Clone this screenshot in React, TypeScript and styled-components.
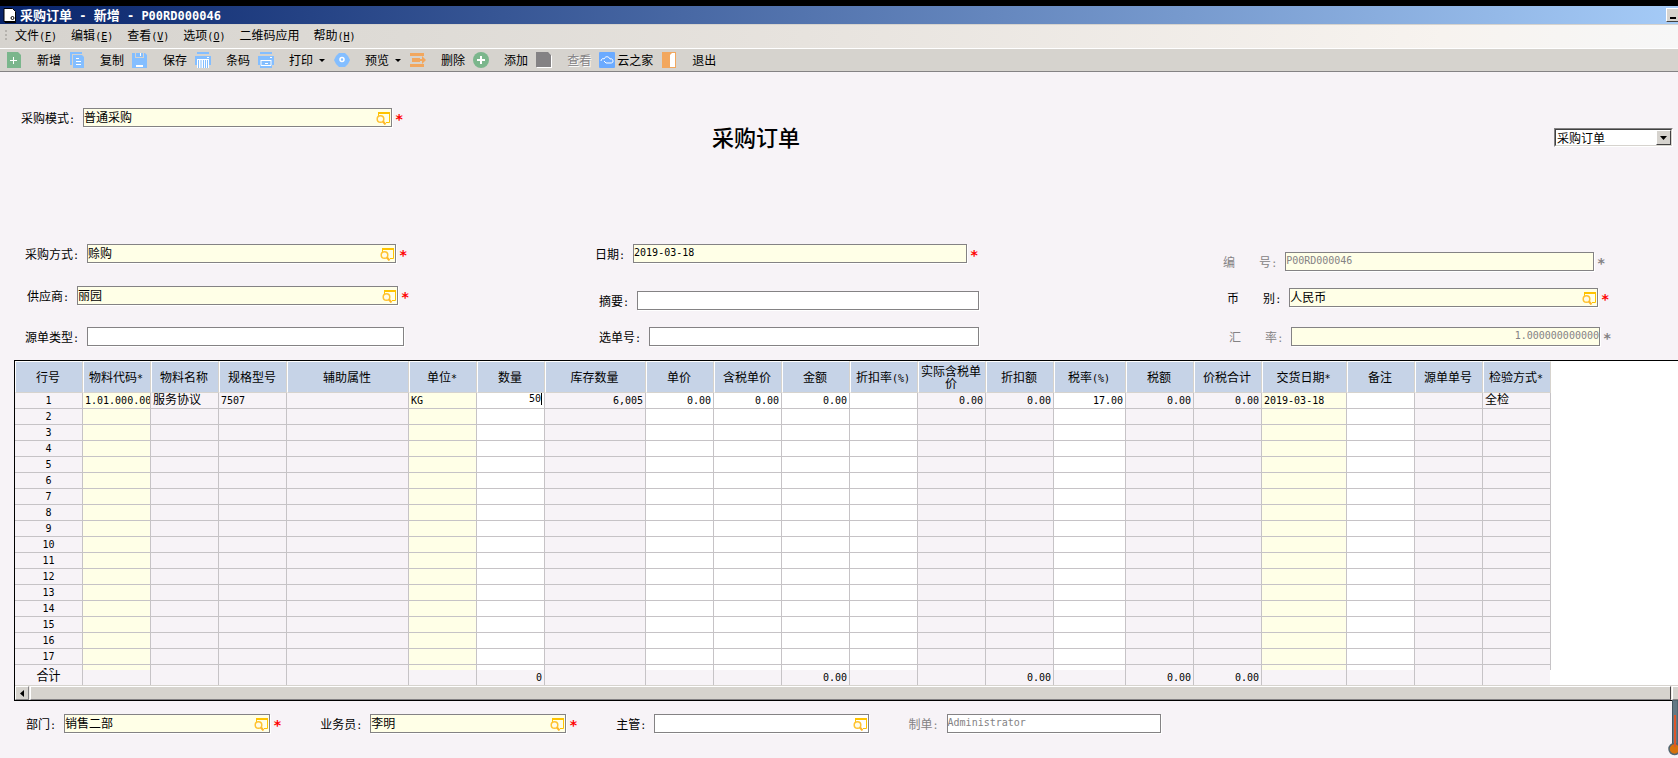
import React from "react";
import styled, { createGlobalStyle, css } from "styled-components";

const GlobalStyle = createGlobalStyle`
  * { box-sizing: border-box; }
  body {
    margin: 0;
    background: #f7f3f7;
    color: #000;
    font: 12px/14px "Noto Sans CJK SC", "Liberation Sans", sans-serif;
  }
  button, input, select { font: inherit; color: inherit; margin: 0; padding: 0; border: 0; border-radius: 0; background: none; }
  input:focus, select:focus { outline: none; }
`;

const MONO = `"DejaVu Sans Mono", "Liberation Mono", monospace`;

/* ---------- text ---------- */

const Latin = styled.span`
  font-family: ${MONO};
  font-size: 10px;
  line-height: 0;
  white-space: pre;
`;

/* Half-width characters are set in the narrow fixed-pitch face. */
function Mixed({ text }: { text: string }) {
  return (
    <>
      {text
        .split(/([\x20-\x7e]+)/)
        .filter(Boolean)
        .map((part, i) => (/^[\x20-\x7e]/.test(part) ? <Latin key={i}>{part}</Latin> : part))}
    </>
  );
}

/* ---------- window chrome ---------- */

const Page = styled.div`
  position: relative;
  min-height: 100vh;
  overflow: hidden;
`;

const TitleBar = styled.header`
  display: flex;
  align-items: center;
  gap: 4px;
  height: 24px;
  padding-left: 3px;
  border-top: 6px solid #000;
  background: linear-gradient(90deg, #08246b, #a5cbf7);
  color: #fff;
  font-size: 13px;
  font-weight: bold;
  line-height: 18px;
  ${Latin} { font-size: 12px; }
`;

const Caption = styled.span`
  flex: 1;
`;

const MinimizeButton = styled.button`
  flex: none;
  display: flex;
  align-items: flex-end;
  width: 12px;
  height: 14px;
  padding: 0 0 2px 3px;
  border: solid;
  border-width: 1px 0 1px 1px;
  border-color: #fff #424142 #424142 #fff;
  background: #d6d3ce;
`;

const MenuBar = styled.nav`
  display: flex;
  align-items: center;
  gap: 14px;
  height: 25px;
  padding: 0 0 3px 5px;
  border-top: 1px solid #d6d3ce;
  border-bottom: 1px solid #fff;
  background: linear-gradient(90deg, #d6d3ce, #dedbd6 24%, #e7e3de 48%, #f7f3ef 86%, #f7f7f7);
`;

const Grip = styled.span`
  width: 2px;
  height: 11px;
  margin-right: -6px;
  background: repeating-linear-gradient(#b5b2ad 0 2px, transparent 2px 4px);
`;

const MenuItem = styled.button`
  white-space: nowrap;
`;

const ToolBar = styled.div`
  display: flex;
  align-items: center;
  height: 23px;
  padding-left: 6px;
  border-bottom: 1px solid #848284;
  background: #d6d3ce;
`;

const ToolButton = styled.button<{ $tight?: boolean }>`
  display: flex;
  align-items: center;
  gap: ${(p) => (p.$tight ? 2 : 15)}px;
  padding-right: 8px;
  white-space: nowrap;
  svg { flex: none; }
  &:disabled {
    color: #848284;
    text-shadow: 1px 1px #fff;
  }
`;

const DropMark = styled.span`
  margin: 0 1px 0 -9px;
  border: 3px solid transparent;
  border-width: 3px 3px 0;
  border-top-color: #000;
`;

/* ---------- form ---------- */

const Heading = styled.section`
  display: grid;
  grid-template-columns: 381fr 708fr 444fr 119fr;
  align-items: start;
  height: 172px;
  padding: 36px 5px 0 21px;
`;

const DocTitle = styled.h1`
  margin: 18px 0 0;
  text-align: center;
  font-size: 22px;
  line-height: 20px;
  font-weight: 500;
`;

const ComboBox = styled.div`
  position: relative;
  grid-column: 4;
  margin-top: 20px;
  border: 1px solid;
  border-color: #848284 #fff #fff #848284;
`;

const Select = styled.select`
  display: block;
  appearance: none;
  width: 100%;
  height: 17px;
  padding-left: 1px;
  border: 1px solid;
  border-color: #424142 #d6d3ce #d6d3ce #424142;
  background: #fff;
  line-height: 14px;
`;

const ComboArrow = styled.span`
  position: absolute;
  top: 1px;
  right: 1px;
  display: flex;
  align-items: center;
  justify-content: center;
  width: 15px;
  height: 15px;
  border: 1px solid;
  border-color: #fff #424142 #424142 #fff;
  background: #d6d3ce;
  pointer-events: none;
`;

const FormGrid = styled.section`
  display: grid;
  grid-template-columns: 383fr 187fr 384fr 244fr 387fr;
  align-items: end;
  padding: 0 68px 0 25px;
`;

const Column = styled.div<{ $col: number }>`
  grid-column: ${(p) => p.$col};
  display: flex;
  flex-direction: column;
`;

const FieldRow = styled.div<{ $top?: number; $start?: number; $end?: number; $muted?: boolean }>`
  display: flex;
  min-width: 0;
  height: 19px;
  margin-top: ${(p) => p.$top ?? 0}px;
  padding: 0 ${(p) => p.$end ?? 0}px 0 ${(p) => p.$start ?? 0}px;
  color: ${(p) => (p.$muted ? "#848284" : "#000")};
`;

const Label = styled.label`
  flex: none;
  padding: 3px 8px 0 0;
  white-space: pre;
`;

const Box = styled.div<{ $cream?: boolean }>`
  flex: 1;
  display: flex;
  min-width: 0;
  border: 1px solid #848284;
  box-shadow: 1px 1px #fff;
  background: ${(p) => (p.$cream ? "#ffffe7" : "#fff")};
`;

const Input = styled.input<{ $latin?: boolean; $right?: boolean }>`
  flex: 1;
  min-width: 0;
  height: 15px;
  text-align: ${(p) => (p.$right ? "right" : "left")};
  ${(p) =>
    p.$latin &&
    css`
      font-family: ${MONO};
      font-size: 10px;
    `}
`;

const LookupButton = styled.button`
  display: flex;
  padding: 3px 1px 0 0;
`;

const Star = styled.span<{ $muted?: boolean }>`
  flex: none;
  width: 7px;
  margin-left: 3px;
  padding-top: 3px;
  color: ${(p) => (p.$muted ? "#848284" : "#f00")};
  font: bold 14px/16px ${MONO};
`;

const Footer = styled.section`
  display: grid;
  grid-template-columns: 254fr 256fr 252fr 252fr 477fr;
  column-gap: 40px;
  padding: 13px 0 25px 26px;
`;

/* ---------- grid ---------- */

const Sheet = styled.section`
  margin: 14px 0 0 14px;
  border: 1px solid #000;
  border-right: 0;
  background: #fff;
  overflow: hidden;
`;

const Table = styled.table`
  table-layout: fixed;
  width: 0;
  border-collapse: separate;
  border-spacing: 0;
`;

const HeadCell = styled.th`
  height: 32px;
  padding: 0 2px 0 0;
  border: 1px solid;
  border-color: #fff #d6d3ce #d6d3ce #fff;
  background: #c6d3e7;
  font-weight: normal;
  line-height: 12px;
`;

type Tone = "plain" | "cream" | "white";
const TONES: Record<Tone, string> = { plain: "#f7f3f7", cream: "#ffffe7", white: "#fff" };

const Cell = styled.td<{ $tone: Tone; $align?: string }>`
  height: 16px;
  padding: 0 2px 3px;
  border-right: 1px solid #c6c3c6;
  border-bottom: 1px solid #c6c3c6;
  background: ${(p) => TONES[p.$tone]};
  line-height: 12px;
  text-align: ${(p) => p.$align ?? "left"};
  white-space: nowrap;
  overflow: hidden;
`;

const CutCell = styled(Cell)`
  height: 5px;
  padding-bottom: 0;
  border-bottom: 0;
`;

const Clip = styled.div`
  height: 5px;
  overflow: hidden;
`;

const TotalCell = styled(Cell)`
  height: 15px;
  border-bottom: 0;
  &:last-child { border-right-color: #fff; }
`;

const QtyInput = styled.input`
  display: block;
  width: 100%;
  height: 12px;
  border-right: 1px solid #000;
  font-family: ${MONO};
  font-size: 10px;
  line-height: 12px;
  text-align: right;
`;

const ScrollBar = styled.div`
  display: flex;
  gap: 1px;
  height: 15px;
  border-top: 1px solid #d6d3ce;
  background: #efebe7;
`;

const ScrollButton = styled.button`
  flex: none;
  display: flex;
  align-items: center;
  justify-content: center;
  width: 14px;
  border: 1px solid;
  border-color: #fff #848284 #848284 #fff;
  background: #d6d3ce;
`;

const ScrollEnd = styled(ScrollButton)`
  width: 6px;
  border-right: 0;
`;

const Thumb = styled.div`
  flex: 1;
  border: 1px solid;
  border-color: #fff #424142 #848284 #fff;
  background: #d6d3ce;
`;

const Gauge = styled.svg`
  position: absolute;
  top: 700px;
  right: 0;
`;

/* ---------- icons ---------- */

const Svg = ({ children, w = 16, h = 16 }: { children: React.ReactNode; w?: number; h?: number }) => (
  <svg width={w} height={h} viewBox={`0 0 ${w} ${h}`} fill="none" aria-hidden="true">
    {children}
  </svg>
);

const BLUE = "#84beff";
const GREEN = "#7bb68c";
const ORANGE = "#f2a75e";

const icons: Record<string, React.ReactNode> = {
  add: (
    <Svg>
      <path d="M1 0h11l3 3v13H1z" fill={GREEN} />
      <path d="M7.500 5v7M4 8.500h7" stroke="#fff" />
    </Svg>
  ),
  copy: (
    <Svg>
      <path d="M1 0h12v2H3v11H1z" fill={BLUE} />
      <path d="M4 3h9l2 2v11H4z" fill={BLUE} />
      <path d="M7 6.500h3M7 9.500h5M7 12.500h5" stroke="#fff" />
    </Svg>
  ),
  save: (
    <Svg>
      <path d="M0 1h3v5h9V1h1l2 2v13H0z" fill={BLUE} />
      <path d="M4 1h7v4H4z" fill={BLUE} />
      <path d="M8.500 1v3" stroke="#fff" />
      <path d="M4 13h7v2H4z" fill="#fff" />
    </Svg>
  ),
  barcode: (
    <Svg>
      <path d="M2 0h12v2H2zM0 4h16v9H0z" fill={BLUE} />
      <path d="M2 7h12v9H2z" fill="#fff" />
      <path d="M3.500 8v8M6 8v8M8.500 8v8M10.500 8v8M12.500 8v8" stroke={BLUE} />
      <path d="M12 5h2v1h-2z" fill="#fff" />
    </Svg>
  ),
  print: (
    <Svg>
      <path d="M2 0h12v2H2zM0 4h16v9h-2v3H2v-3H0z" fill={BLUE} />
      <path d="M12 5.500h2M3 8.500h10M3 8v5.500h10V8M7 11.500h3" stroke="#fff" />
    </Svg>
  ),
  preview: (
    <Svg>
      <path d="M0 8l2-4 3-3h6l3 3 2 4-2 4-3 3H5l-3-3z" fill={BLUE} />
      <circle cx="8" cy="7.500" r="2" stroke="#fff" strokeWidth="1.500" />
    </Svg>
  ),
  remove: (
    <Svg>
      <path d="M0 1h14v3H0zM0 12h14v3H0zM2 6h8v4H2zM12 4l4 4-4 4V9h-2V7h2z" fill={ORANGE} />
    </Svg>
  ),
  append: (
    <Svg>
      <circle cx="8" cy="8" r="8" fill={GREEN} />
      <path d="M8 4v8M4 8h8" stroke="#fff" strokeWidth="2" />
    </Svg>
  ),
  view: (
    <Svg>
      <path d="M1 1h12l3 3v12H1z" fill="#fff" />
      <path d="M0 0h12l3 3v12H0z" fill="#848284" />
    </Svg>
  ),
  cloud: (
    <Svg>
      <rect width="16" height="16" rx="1" fill="#6baaff" />
      <path d="M2 9c0-2 2-3 3-2 1-3 5-3 6 0 2-1 3 1 3 2 0 2-1 2-3 2H7L5 9" stroke="#fff" />
    </Svg>
  ),
  exit: (
    <Svg>
      <path d="M1 0h14v16H1z" fill={ORANGE} />
      <path d="M9 3l2-2h3v14H9z" fill="#fff" />
    </Svg>
  ),
};

const LookupIcon = () => (
  <Svg w={14} h={13}>
    <path d="M2 1h12" stroke="#ffc300" strokeWidth="2" />
    <path d="M2.500 2v2M13.500 2v8.500H10" stroke="#ffc300" />
    <circle cx="4.500" cy="7" r="3.300" stroke="#ffc331" strokeWidth="1.500" fill="#fffbe7" />
    <path d="M7 9.500l2.500 3" stroke="#ffb629" strokeWidth="2" />
  </Svg>
);

const AppIcon = () => (
  <Svg w={13} h={16}>
    <path d="M1 1.500h8.500l3 3v10H1z" fill="#fff" stroke="#000" />
    <path d="M2 15.500h11V5" stroke="#000" />
    <circle cx="9.500" cy="11" r="1.500" stroke="#000" />
  </Svg>
);

/* ---------- data ---------- */

const menus: [string, string?][] = [["文件", "F"], ["编辑", "E"], ["查看", "V"], ["选项", "O"], ["二维码应用"], ["帮助", "H"]];

type Tool = { label: string; icon: string; drop?: boolean; disabled?: boolean; tight?: boolean };
const tools: Tool[] = [
  { label: "新增", icon: "add" },
  { label: "复制", icon: "copy" },
  { label: "保存", icon: "save" },
  { label: "条码", icon: "barcode" },
  { label: "打印", icon: "print", drop: true },
  { label: "预览", icon: "preview", drop: true },
  { label: "删除", icon: "remove" },
  { label: "添加", icon: "append" },
  { label: "查看", icon: "view", disabled: true },
  { label: "云之家", icon: "cloud", tight: true },
  { label: "退出", icon: "exit" },
];

type Col = { title: string; width: number; tone: Tone; value?: string; align?: string; total?: string };
const columns: Col[] = [
  { title: "行号", width: 68, tone: "plain", align: "center", total: "合计" },
  { title: "物料代码*", width: 68, tone: "cream", value: "1.01.000.00" },
  { title: "物料名称", width: 68, tone: "plain", value: "服务协议" },
  { title: "规格型号", width: 68, tone: "plain", value: "7507" },
  { title: "辅助属性", width: 122, tone: "plain" },
  { title: "单位*", width: 68, tone: "cream", value: "KG" },
  { title: "数量", width: 68, tone: "white", value: "50", align: "right", total: "0" },
  { title: "库存数量", width: 101, tone: "plain", value: "6,005", align: "right" },
  { title: "单价", width: 68, tone: "white", value: "0.00", align: "right" },
  { title: "含税单价", width: 68, tone: "white", value: "0.00", align: "right" },
  { title: "金额", width: 68, tone: "white", value: "0.00", align: "right", total: "0.00" },
  { title: "折扣率(%)", width: 68, tone: "white" },
  { title: "实际含税单价", width: 68, tone: "plain", value: "0.00", align: "right" },
  { title: "折扣额", width: 68, tone: "plain", value: "0.00", align: "right", total: "0.00" },
  { title: "税率(%)", width: 72, tone: "white", value: "17.00", align: "right" },
  { title: "税额", width: 68, tone: "plain", value: "0.00", align: "right", total: "0.00" },
  { title: "价税合计", width: 68, tone: "plain", value: "0.00", align: "right", total: "0.00" },
  { title: "交货日期*", width: 85, tone: "cream", value: "2019-03-18" },
  { title: "备注", width: 68, tone: "white" },
  { title: "源单单号", width: 68, tone: "plain" },
  { title: "检验方式*", width: 68, tone: "plain", value: "全检" },
];

const rowNumbers = Array.from({ length: 17 }, (_, i) => i + 1);

/* ---------- parts ---------- */

type FieldProps = {
  id: string;
  label: string;
  value?: string;
  lookup?: boolean;
  star?: boolean;
  cream?: boolean;
  muted?: boolean;
  right?: boolean;
  top?: number;
  start?: number;
  end?: number;
};

function Field({ id, label, value = "", lookup, star, cream, muted, right, top, start, end }: FieldProps) {
  return (
    <FieldRow $top={top} $start={start} $end={end} $muted={muted}>
      <Label htmlFor={id}>
        <Mixed text={label} />
      </Label>
      <Box $cream={cream}>
        <Input id={id} defaultValue={value} readOnly={muted} $latin={/^[\x20-\x7e]+$/.test(value)} $right={right} />
        {lookup && (
          <LookupButton type="button" aria-label="查找">
            <LookupIcon />
          </LookupButton>
        )}
      </Box>
      {star && <Star $muted={muted}>*</Star>}
    </FieldRow>
  );
}

function OrderGrid() {
  return (
    <Sheet>
      <Table>
        <colgroup>
          {columns.map((c) => (
            <col key={c.title} style={{ width: c.width }} />
          ))}
        </colgroup>
        <thead>
          <tr>
            {columns.map((c) => (
              <HeadCell key={c.title} scope="col">
                <Mixed text={c.title} />
              </HeadCell>
            ))}
          </tr>
        </thead>
        <tbody>
          {rowNumbers.map((n) => (
            <tr key={n}>
              {columns.map((c, i) => (
                <Cell key={c.title} $tone={c.tone} $align={c.align}>
                  {i === 0 ? (
                    <Latin>{n}</Latin>
                  ) : n > 1 ? null : c.title === "数量" ? (
                    <QtyInput aria-label="数量" defaultValue={c.value} />
                  ) : (
                    c.value && <Mixed text={c.value} />
                  )}
                </Cell>
              ))}
            </tr>
          ))}
          <tr>
            {columns.map((c, i) => (
              <CutCell key={c.title} $tone={c.tone} $align={c.align}>
                <Clip>{i === 0 && <Latin>18</Latin>}</Clip>
              </CutCell>
            ))}
          </tr>
        </tbody>
        <tfoot>
          <tr>
            {columns.map((c) => (
              <TotalCell key={c.title} $tone="plain" $align={c.align}>
                {c.total && <Mixed text={c.total} />}
              </TotalCell>
            ))}
          </tr>
        </tfoot>
      </Table>
      <ScrollBar>
        <ScrollButton type="button" aria-label="向左滚动">
          <Svg w={4} h={7}>
            <path d="M4 0v7L0 3.500z" fill="#000" />
          </Svg>
        </ScrollButton>
        <Thumb />
        <ScrollEnd type="button" aria-label="向右滚动" />
      </ScrollBar>
    </Sheet>
  );
}

export default function App() {
  return (
    <Page>
      <GlobalStyle />
      <TitleBar>
        <AppIcon />
        <Caption>
          <Mixed text="采购订单 - 新增 - P00RD000046" />
        </Caption>
        <MinimizeButton type="button" aria-label="最小化">
          <Svg w={6} h={2}>
            <path d="M0 0h6v2H0z" fill="#000" />
          </Svg>
        </MinimizeButton>
      </TitleBar>
      <MenuBar>
        <Grip />
        {menus.map(([name, key]) => (
          <MenuItem key={name} type="button">
            {name}
            {key && (
              <Latin>
                (<u>{key}</u>)
              </Latin>
            )}
          </MenuItem>
        ))}
      </MenuBar>
      <ToolBar>
        {tools.map((t) => (
          <ToolButton key={t.icon} type="button" disabled={t.disabled} $tight={t.tight}>
            {icons[t.icon]}
            <span>{t.label}</span>
            {t.drop && <DropMark />}
          </ToolButton>
        ))}
      </ToolBar>

      <Heading>
        <Field id="mode" label="采购模式:" value="普通采购" lookup star cream />
        <DocTitle>采购订单</DocTitle>
        <ComboBox>
          <Select aria-label="单据类型" defaultValue="采购订单">
            <option>采购订单</option>
          </Select>
          <ComboArrow>
            <Svg w={7} h={4}>
              <path d="M0 0h7L3.500 4z" fill="#000" />
            </Svg>
          </ComboArrow>
        </ComboBox>
      </Heading>

      <FormGrid>
        <Column $col={1}>
          <Field id="way" label="采购方式:" value="赊购" lookup star cream end={2} />
          <Field id="supplier" label="供应商:" value="丽园" lookup star cream top={23} start={2} />
          <Field id="source" label="源单类型:" top={22} end={4} />
        </Column>
        <Column $col={3}>
          <Field id="date" label="日期:" value="2019-03-18" star cream end={2} />
          <Field id="summary" label="摘要:" top={28} start={4} />
          <Field id="pick" label="选单号:" top={17} start={4} />
        </Column>
        <Column $col={5}>
          <Field id="number" label="编    号:" value="P00RD000046" star cream muted end={6} />
          <Field id="currency" label="币    别:" value="人民币" lookup star cream top={17} start={4} end={2} />
          <Field id="rate" label="汇    率:" value="1.000000000000" star cream muted right top={20} start={6} />
        </Column>
      </FormGrid>

      <OrderGrid />

      <Footer>
        <Field id="dept" label="部门:" value="销售二部" lookup star cream />
        <Field id="clerk" label="业务员:" value="李明" lookup star cream />
        <Field id="manager" label="主管:" lookup />
        <Field id="maker" label="制单:" value="Administrator" muted />
      </Footer>

      <Gauge width="10" height="58" viewBox="0 0 10 58" fill="none" aria-hidden="true">
        <path d="M4.500 0h5.500v46H4.500z" fill="#637884" stroke="#42555f" />
        <circle cx="6.500" cy="49" r="5.500" fill="#d6710c" stroke="#52656f" strokeWidth="1.500" />
        <path d="M7 15v32" stroke="#de5529" strokeWidth="2" />
      </Gauge>
    </Page>
  );
}
